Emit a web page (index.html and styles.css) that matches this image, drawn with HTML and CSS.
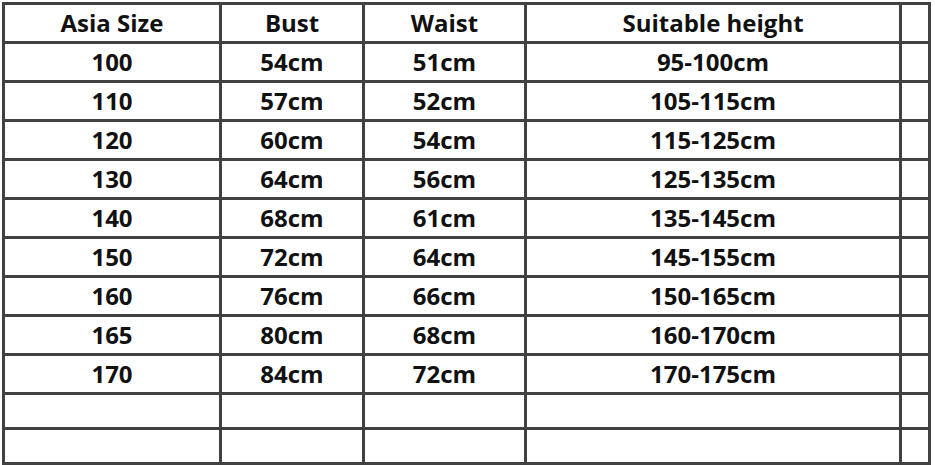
FILE: index.html
```html
<!DOCTYPE html>
<html>
<head>
<meta charset="utf-8">
<link rel="stylesheet" href="styles.css">
</head>
<body>
<div class="chart">
  <div class="cell">Asia Size</div><div class="cell">Bust</div><div class="cell">Waist</div><div class="cell">Suitable height</div><div class="cell"></div>
  <div class="cell">100</div><div class="cell">54cm</div><div class="cell">51cm</div><div class="cell">95-100cm</div><div class="cell"></div>
  <div class="cell">110</div><div class="cell">57cm</div><div class="cell">52cm</div><div class="cell">105-115cm</div><div class="cell"></div>
  <div class="cell">120</div><div class="cell">60cm</div><div class="cell">54cm</div><div class="cell">115-125cm</div><div class="cell"></div>
  <div class="cell">130</div><div class="cell">64cm</div><div class="cell">56cm</div><div class="cell">125-135cm</div><div class="cell"></div>
  <div class="cell">140</div><div class="cell">68cm</div><div class="cell">61cm</div><div class="cell">135-145cm</div><div class="cell"></div>
  <div class="cell">150</div><div class="cell">72cm</div><div class="cell">64cm</div><div class="cell">145-155cm</div><div class="cell"></div>
  <div class="cell">160</div><div class="cell">76cm</div><div class="cell">66cm</div><div class="cell">150-165cm</div><div class="cell"></div>
  <div class="cell">165</div><div class="cell">80cm</div><div class="cell">68cm</div><div class="cell">160-170cm</div><div class="cell"></div>
  <div class="cell">170</div><div class="cell">84cm</div><div class="cell">72cm</div><div class="cell">170-175cm</div><div class="cell"></div>
  <div class="cell"></div><div class="cell"></div><div class="cell"></div><div class="cell"></div><div class="cell"></div>
  <div class="cell"></div><div class="cell"></div><div class="cell"></div><div class="cell"></div><div class="cell"></div>
</div>
</body>
</html>
```
FILE: styles.css
```css
html, body {
  margin: 0;
  padding: 0;
  background: #fff;
}
.chart {
  margin: 2px 0 0 2px;
  width: 929px;
  box-sizing: border-box;
  display: grid;
  grid-template-columns: 214px 140px 159px 372px 26px;
  grid-template-rows: repeat(10, 36px) 32px 32px;
  gap: 3px;
  padding: 3px;
  background: #414141;
  font-family: "Open Sans", "Liberation Sans", sans-serif;
  font-weight: 700;
  font-size: 24px;
  color: #111;
}
.cell {
  background: #fff;
  display: flex;
  align-items: center;
  justify-content: center;
  line-height: 1;
}
```
